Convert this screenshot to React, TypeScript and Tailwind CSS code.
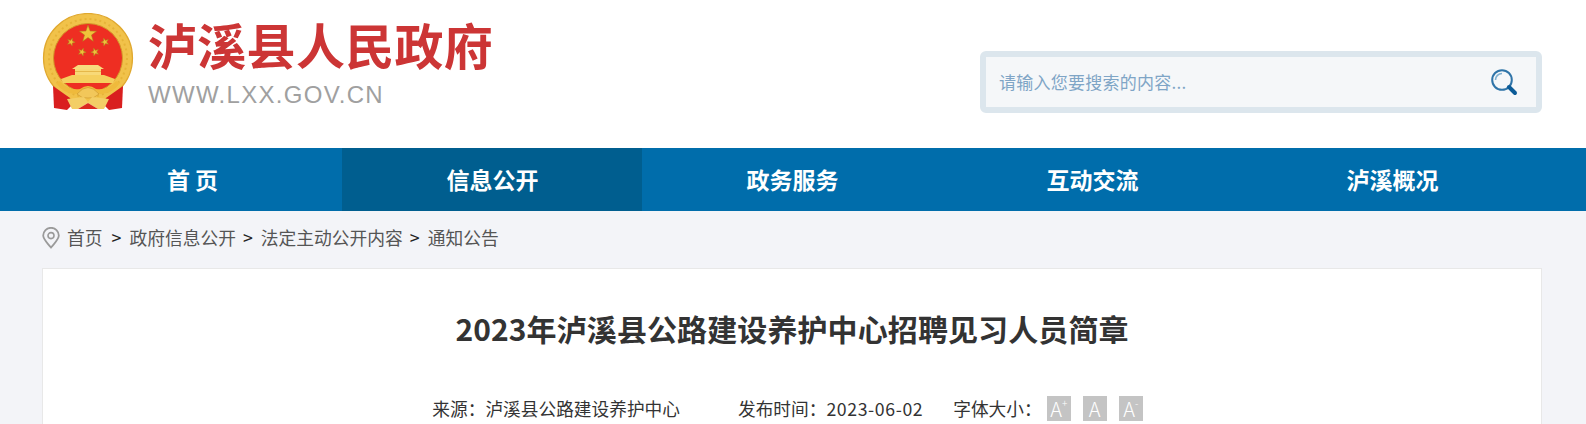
import React from "react";

const cjk = { fontFamily: '"Noto Sans CJK SC", "Liberation Sans", sans-serif' };

function Star({ cx, cy, r, rot = 0 }: { cx: number; cy: number; r: number; rot?: number }) {
  const pts: string[] = [];
  for (let i = 0; i < 10; i++) {
    const rad = i % 2 === 0 ? r : r * 0.4;
    const a = ((-90 + i * 36 + rot) * Math.PI) / 180;
    pts.push(`${(cx + rad * Math.cos(a)).toFixed(2)},${(cy + rad * Math.sin(a)).toFixed(2)}`);
  }
  return <polygon points={pts.join(" ")} fill="#f0c23a" stroke="#a9801c" strokeWidth="0.5" />;
}

function Emblem() {
  return (
    <svg width="92" height="100" viewBox="0 0 92 100" className="shrink-0 blur-[0.4px]">
      <circle cx="46" cy="45" r="44.5" fill="#f1c24a" stroke="#e0a82e" strokeWidth="1.2" />
      <circle cx="46" cy="45" r="39" fill="none" stroke="#e6b338" strokeWidth="2" strokeDasharray="2 3" />
      <circle cx="46" cy="45" r="34.5" fill="#ee2e22" stroke="#d4982a" strokeWidth="1" />
      <Star cx={46} cy={21} r={9} />
      <Star cx={29} cy={29} r={4.2} rot={20} />
      <Star cx={63} cy={29} r={4.2} rot={-20} />
      <Star cx={40} cy={39} r={4.2} rot={20} />
      <Star cx={53} cy={39} r={4.2} rot={-20} />
      <path d="M36 52 H56 L62 56 H30 Z" fill="#f7dc7e" />
      <path d="M33 56 H59 V62 H33 Z" fill="#f8d977" />
      <path d="M33 58 H59 V59 H33 Z" fill="#e6b84a" />
      <path d="M19 66 L30 62 H62 L73 66 L71 70 H21 Z" fill="#f5cf5e" />
      <path d="M11 73 L28 85 L30 92 L25 97 L12 95 Z" fill="#d91f1f" />
      <path d="M81 73 L64 85 L62 92 L67 97 L80 95 Z" fill="#d91f1f" />
      <path d="M14 70 Q24 84 40 80 Q46 73 52 80 Q68 84 78 70 L74 68 Q66 78 54 76 Q46 70 38 76 Q26 78 18 68 Z" fill="#efba3c" />
      <path d="M35 81 Q46 68 57 81 Q52 86 46 85 Q40 86 35 81 Z" fill="#f2c75a" stroke="#c9942a" strokeWidth="0.6" />
      <path d="M25 86 L42 84 L46 89 L50 84 L67 86 L62 96 H56 L46 90 L36 96 H30 Z" fill="#f3ce66" />
      <path d="M36 96 L46 90 L56 96 Z" fill="#dc2a20" />
    </svg>
  );
}

function SearchIcon() {
  return (
    <svg width="28" height="28" viewBox="0 0 28 28" fill="none">
      <circle cx="12" cy="12" r="9.8" stroke="#2f74a8" strokeWidth="2" />
      <path d="M5.5 12 A6.5 6.5 0 0 1 12 5.5" stroke="#7fb0d0" strokeWidth="1.6" />
      <path d="M19 19 L25 25" stroke="#0b5b97" strokeWidth="4" strokeLinecap="round" />
    </svg>
  );
}

function PinIcon() {
  return (
    <svg width="18" height="22" viewBox="0 0 18 22" fill="none">
      <path d="M9 20.5 C5 15.5 1.2 12.5 1.2 8.6 A7.8 7.8 0 0 1 16.8 8.6 C16.8 12.5 13 15.5 9 20.5 Z" stroke="#9a9a9a" strokeWidth="1.8" />
      <circle cx="9" cy="8.6" r="3" stroke="#9a9a9a" strokeWidth="1.6" />
    </svg>
  );
}

function FontBtn({ sup }: { sup?: string }) {
  return (
    <span className="flex h-[25px] w-[24px] items-start justify-center bg-[#c4c4c4] text-[20px] font-light leading-[25px] text-white">
      A{sup ? <span className="text-[10px] leading-[14px]">{sup}</span> : null}
    </span>
  );
}

const navItems = ["首 页", "信息公开", "政务服务", "互动交流", "泸溪概况"];
const crumbs = ["首页", "政府信息公开", "法定主动公开内容", "通知公告"];

export default function App() {
  return (
    <div className="h-[424px] overflow-hidden bg-[#f3f4f8]" style={cjk}>
      <header className="flex h-[148px] items-start justify-between bg-white pl-[42px] pr-[44px]">
        <div className="flex pt-[13px]">
          <Emblem />
          <div className="ml-[14px] flex flex-col">
            <div className="mt-[2px] whitespace-nowrap text-[49px] font-bold leading-[58px] tracking-[0.3px] text-[#cc3535]">
              泸溪县人民政府
            </div>
            <div
              className="mt-[8px] text-[24px] leading-[28px] tracking-[1.3px] text-[#a0a0a0]"
              style={{ fontFamily: '"Liberation Sans", sans-serif' }}
            >
              WWW.LXX.GOV.CN
            </div>
          </div>
        </div>
        <div className="mt-[51px] flex h-[62px] w-[562px] items-center justify-between rounded-[6px] border-[6px] border-[#dce6ed] bg-[#f5f7f9] pl-[13px] pr-[18px]">
          <span className="text-[17px] tracking-[0.25px] text-[#7fa5c6]">请输入您要搜索的内容...</span>
          <SearchIcon />
        </div>
      </header>

      <nav className="flex h-[63px] bg-[#006dab] pl-[42px]">
        {navItems.map((t, i) => (
          <a
            key={t}
            className={`flex w-[300px] items-center justify-center pb-[1px] pl-[1px] text-[23px] font-bold text-white ${i === 1 ? "bg-[#005e8f]" : ""}`}
          >
            {t}
          </a>
        ))}
      </nav>

      <div className="flex h-[57px] items-center px-[42px] pb-[4px] text-[17.75px] text-[#555555]">
        <span className="mr-[7px] flex">
          <PinIcon />
        </span>
        {crumbs.map((c, i) => (
          <React.Fragment key={c}>
            {i > 0 && (
              <span className={`mr-[8px] text-[#222222] ${i === 1 ? "ml-[9px]" : "ml-[7px]"}`}>&gt;</span>
            )}
            <span>{c}</span>
          </React.Fragment>
        ))}
      </div>

      <main className="ml-[42px] mr-[44px] h-[400px] border border-[#e8e8e8] bg-white">
        <h1 className="mt-[38px] text-center text-[30px] font-bold leading-[42px] tracking-[0.1px] text-[#333333]">
          2023年泸溪县公路建设养护中心招聘见习人员简章
        </h1>
        <div className="mt-[46px] flex items-center justify-center pr-[9px] text-[17.7px] leading-[26px] text-[#333333]">
          <span>{"来源\uFF1A"}</span>
          <span>泸溪县公路建设养护中心</span>
          <span className="ml-[58px]">{"发布时间\uFF1A"}</span>
          <span className="tracking-[0.6px]">2023-06-02</span>
          <span className="ml-[30px]">{"字体大小\uFF1A"}</span>
          <span className="ml-[5px] flex gap-[12px]">
            <FontBtn sup="+" />
            <FontBtn />
            <FontBtn sup="-" />
          </span>
        </div>
      </main>
    </div>
  );
}
